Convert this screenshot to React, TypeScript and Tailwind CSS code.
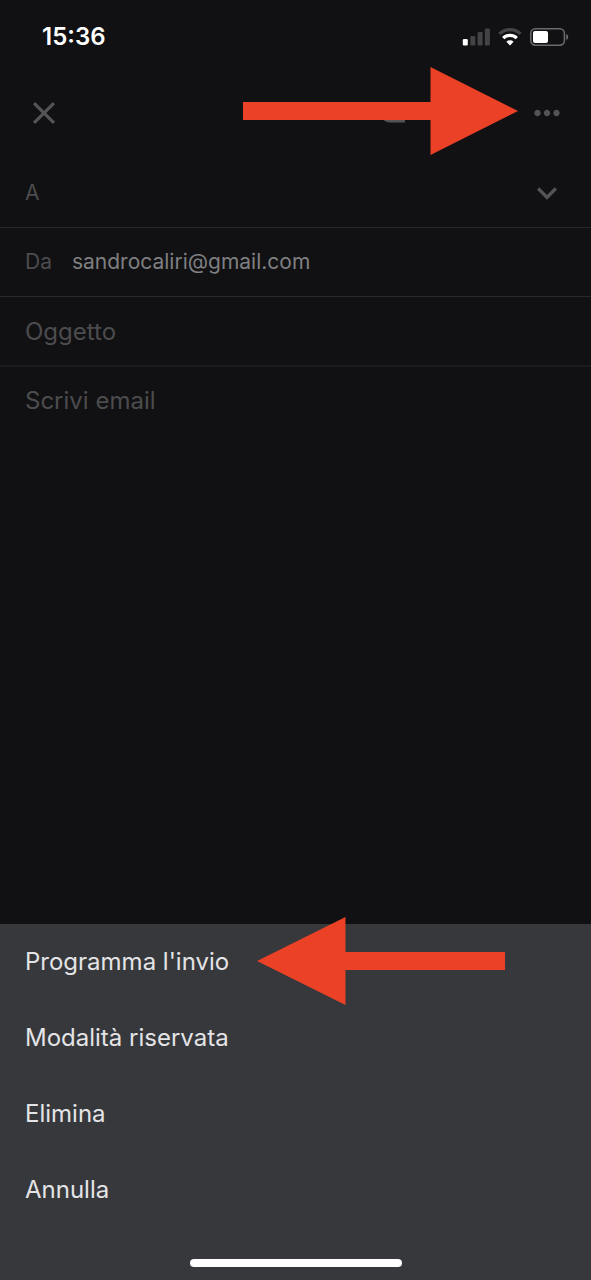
import { useState } from 'react';
import { MdAttachment, MdClose, MdKeyboardArrowDown, MdMoreHoriz } from 'react-icons/md';

const menuItems = ["Programma l'invio", 'Modalità riservata', 'Elimina', 'Annulla'];

const StatusBar = () => (
  <header className="flex h-[74px] items-center justify-between pl-[42px] pr-[22px] text-white">
    <time className="text-2xl font-semibold leading-7">15:36</time>

    <div className="flex items-center gap-2">
      {/* Cellular signal */}
      <svg className="h-[18px] w-7" viewBox="0 0 28 18" fill="currentColor">
        <rect x="0.8" y="11" width="5" height="6.5" rx="1.3" />
        <g className="text-[#434345]">
          <rect x="8.3" y="8" width="5" height="9.5" rx="1.3" />
          <rect x="15.6" y="4" width="5" height="13.5" rx="1.3" />
          <rect x="22.9" y="0.5" width="5" height="17" rx="1.3" />
        </g>
      </svg>

      {/* Wi-Fi */}
      <svg className="h-[18px] w-6" viewBox="0 0 24 18" fill="none" strokeWidth="3.2">
        <path d="M1.4 5.900a15.200 15.200 0 0 1 21.200 0" stroke="#434345" />
        <path d="M5.2 10.1a9.6 9.6 0 0 1 13.6 0" stroke="currentColor" />
        <path d="M12 17.4 8.4 13.8a5.2 5.2 0 0 1 7.2 0z" fill="currentColor" />
      </svg>

      {/* Battery */}
      <svg className="h-[18px] w-[39px]" viewBox="0 0 39 18" fill="none">
        <rect x="0.8" y="0.8" width="33.6" height="16.4" rx="4.6" stroke="#6b6b6d" strokeWidth="1.5" />
        <rect x="3" y="3" width="15" height="12" rx="2" fill="currentColor" />
        <path d="M36.2 6v6c1.3-.5 2-1.700 2-3s-.7-2.500-2-3z" fill="#6b6b6d" />
      </svg>
    </div>
  </header>
);

const Toolbar = () => (
  <div className="relative mb-1.5 flex h-[78px] items-center justify-between px-[25px] text-[#545456]">
    <button type="button" aria-label="Chiudi">
      <MdClose className="size-[38px]" />
    </button>

    <div className="flex items-center gap-28">
      <button type="button" aria-label="Allega file">
        <MdAttachment className="size-[38px]" />
      </button>
      <button type="button" aria-label="Altre opzioni">
        <MdMoreHoriz className="size-[38px]" />
      </button>
    </div>

    {/* Arrow pointing at the options button */}
    <svg className="absolute right-[73px] top-[-7px] z-10 h-[88px] w-[275px]" viewBox="0 0 275 88" fill="#eb4126">
      <path d="M0 35h187.500V0L275 44l-87.500 44V53H0z" />
    </svg>
  </div>
);

const ComposeForm = () => {
  const [to, setTo] = useState('');
  const [subject, setSubject] = useState('');
  const [body, setBody] = useState('');

  return (
    <form className="flex flex-1 flex-col text-[#4c4c4e]">
      <div className="flex h-[70px] items-center border-b border-[#29292b] pl-[25px] pr-6 text-[21px]">
        <label htmlFor="to">A</label>
        <input
          id="to"
          type="email"
          value={to}
          onChange={e => setTo(e.target.value)}
          className="min-w-0 flex-1 bg-transparent px-5 text-[#7f7f81] outline-none"
        />
        <button type="button" aria-label="Mostra Cc e Ccn" className="text-[#545456]">
          <MdKeyboardArrowDown className="size-10" />
        </button>
      </div>

      <div className="flex h-[69px] items-center gap-5 border-b border-[#29292b] px-[25px] text-[21px]">
        <span>Da</span>
        <span className="text-[#7f7f81]">sandrocaliri@gmail.com</span>
      </div>

      <input
        type="text"
        aria-label="Oggetto"
        placeholder="Oggetto"
        value={subject}
        onChange={e => setSubject(e.target.value)}
        className="h-[70px] w-full border-b-2 border-[#1b1b1d] bg-transparent px-[25px] text-2xl outline-none placeholder:text-[#4c4c4e]"
      />

      <textarea
        aria-label="Scrivi email"
        placeholder="Scrivi email"
        value={body}
        onChange={e => setBody(e.target.value)}
        className="w-full flex-1 resize-none bg-transparent px-[25px] py-[18px] text-2xl outline-none placeholder:text-[#4c4c4e]"
      />
    </form>
  );
};

const ActionSheet = () => (
  <div className="relative bg-[#37383b] text-[#e4e4e7]">
    <ul>
      {menuItems.map(item => (
        <li key={item}>
          <button type="button" className="flex h-[76px] w-full items-center px-[25px] text-left text-2xl">
            {item}
          </button>
        </li>
      ))}
    </ul>

    {/* Home indicator */}
    <div className="flex justify-center pb-[13px] pt-[31px]">
      <div className="h-2 w-[212px] rounded-full bg-white"></div>
    </div>

    {/* Arrow pointing at the first entry */}
    <svg className="absolute left-[257px] top-[-7px] h-[88px] w-[248px]" viewBox="0 0 248 88" fill="#eb4126">
      <path d="M248 35H88.500V0L0 44l88.500 44V53H248z" />
    </svg>
  </div>
);

const App = () => {
  return (
    <main className="flex min-h-screen flex-col bg-[#111113] font-['Inter',sans-serif]">
      <StatusBar />
      <Toolbar />
      <ComposeForm />
      <ActionSheet />
    </main>
  );
};

export default App;
